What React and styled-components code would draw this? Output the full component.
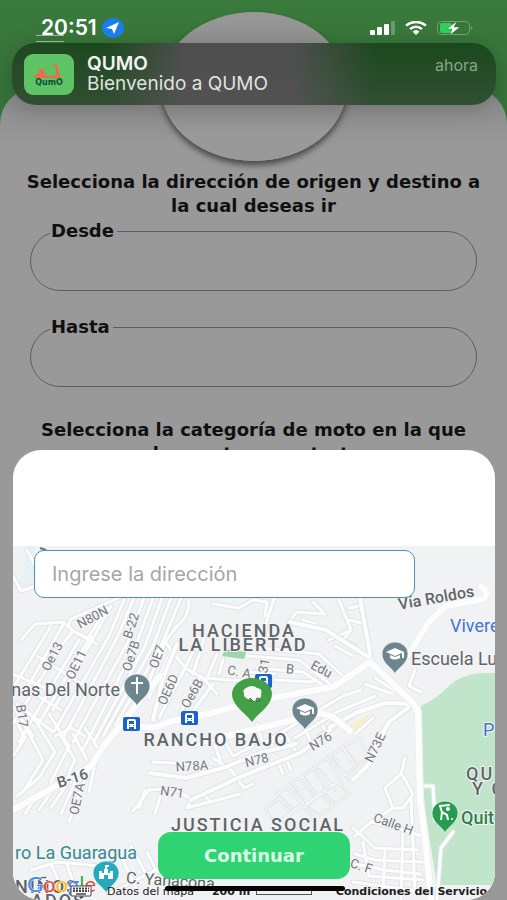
import * as React from "react"
import styled, { createGlobalStyle } from "styled-components"

const GlobalStyle = createGlobalStyle`
  :root {
    --ff-brand: "DejaVu Sans", Verdana, sans-serif;
    --ff-system: Inter, "Liberation Sans", sans-serif;
    --ff-map: Roboto, "Liberation Sans", sans-serif;
  }

  * {
    box-sizing: border-box;
  }

  body {
    margin: 0;
    background: #999999;
  }
`

const Screen = styled.div`
  position: relative;
  height: 100vh;
  overflow: hidden;
  background: linear-gradient(180deg, #3a7a3b 0, #35713a 130px);
  font-family: var(--ff-brand);
`

const StatusBar = styled.div`
  position: absolute;
  z-index: 3;
  top: 16px;
  left: 0;
  right: 0;
  display: flex;
  align-items: center;
  justify-content: space-between;
  height: 24px;
  padding: 0 34px 0 41px;
`

const StatusGroup = styled.div`
  display: flex;
  align-items: center;
  gap: ${({ $gap }) => $gap}px;
`

const Clock = styled.time`
  font: 600 21px/24px var(--ff-system);
  color: #ffffff;
`

const MenuButton = styled.button`
  position: absolute;
  top: 28px;
  left: 36px;
  width: 28px;
  height: 14px;
  padding: 7px 0 0;
  border: 0;
  background: none;
`

const MenuLines = styled.span`
  display: block;
  height: 7px;
  border: solid #a3bca4;
  border-width: 1px 0;
`

const Avatar = styled.div`
  position: relative;
  z-index: 1;
  width: 186px;
  height: 149px;
  margin: 0 auto;
  border-radius: 50%;
  background: linear-gradient(180deg, #989898, #8a8a8a 50%, #999999 80%);
  box-shadow: 0 4px 6px rgba(0, 0, 0, 0.55);
`

const Hero = styled.header`
  padding-top: 12px;
`

const Content = styled.main`
  min-height: 100vh;
  margin-top: -73px;
  padding: 82px 24px 0;
  border-radius: 36px 36px 0 0;
  background: linear-gradient(180deg, #8a8a8a, #999999 60px);
`

const Heading = styled.h2`
  margin: 0;
  padding: ${({ $spaced }) => ($spaced ? "31px 0 0" : "0 0 1px")};
  font: 700 18px/24px var(--ff-brand);
  color: #101010;
  text-align: center;
`

const Field = styled.fieldset`
  height: 72px;
  margin: 0 6px;
  padding: 0 16px 0 19px;
  border: 1px solid #5e5e5e;
  border-radius: 33px;

  & + & {
    margin-top: 24px;
  }
`

const FieldLegend = styled.legend`
  padding: 0 3px 0 1px;
  font: 700 18px/24px var(--ff-brand);
  color: #101010;
`

const FieldInput = styled.input`
  display: block;
  width: 100%;
  height: 40px;
  padding: 0;
  border: 0;
  outline: 0;
  background: transparent;
  font: 400 18px/24px var(--ff-brand);
`

const Toast = styled.section`
  position: absolute;
  z-index: 2;
  top: 43px;
  left: 12px;
  right: 11px;
  display: flex;
  align-items: flex-start;
  height: 62px;
  padding: 11px 18px 10px 12px;
  border-radius: 24px;
  background:
    linear-gradient(180deg, transparent, rgba(90, 90, 90, 0.35)),
    linear-gradient(90deg, #1d481e 0, #1d481e 20%, #4e4e4e 36%, #4e4e4e 58%, #1b491d 75%);
  box-shadow: 0 4px 24px rgba(0, 0, 0, 0.2);
  font-family: var(--ff-system);
`

const AppIcon = styled.svg`
  flex: none;
  width: 50px;
  height: 41px;
`

const ToastText = styled.div`
  flex: 1;
  padding-left: 13px;
  font-size: 19px;
  line-height: 20px;
  color: #dfe3df;
`

const ToastTitle = styled.strong`
  display: block;
  font-weight: 600;
  color: #f1f4f1;
`

const ToastTime = styled.span`
  font-size: 16px;
  line-height: 22px;
  color: #88a489;
`

const Sheet = styled.section`
  position: absolute;
  z-index: 2;
  left: 13px;
  right: 12px;
  bottom: 0;
  display: flex;
  flex-direction: column;
  height: 50vh;
  padding-top: 96px;
  border-radius: 28px;
  overflow: hidden;
  background: #ffffff;
`

const MapArea = styled.div`
  position: relative;
  flex: 1;
  display: flex;
  flex-direction: column;
  justify-content: space-between;
  padding: 4px 0 21px;
`

const MapCanvas = styled.svg`
  position: absolute;
  inset: 0;
  width: 100%;
  height: 100%;
`

const AddressInput = styled.input`
  position: relative;
  width: 79%;
  height: 48px;
  margin-left: 21px;
  padding: 0 17px;
  border: 1px solid #4b94b3;
  border-radius: 10px;
  outline: 0;
  background: #ffffff;
  font: 400 20px/24px var(--ff-system);
  color: #333333;

  &::placeholder {
    color: #a6a6a6;
    opacity: 1;
  }
`

const ContinueButton = styled.button`
  position: relative;
  align-self: center;
  width: 40%;
  height: 47px;
  border: 0;
  border-radius: 13px;
  background: #2fd372;
  font: 700 18px/24px var(--ff-brand);
  color: #d9ffe5;
`

const MapFooter = styled.footer`
  position: absolute;
  left: 57px;
  right: 8px;
  bottom: 0;
  display: flex;
  align-items: center;
  height: 16px;
  font: 400 11px/16px var(--ff-brand);
  color: #202020;
  white-space: nowrap;
`

const KeyboardButton = styled.button`
  display: flex;
  width: 22px;
  margin-right: 15px;
  padding: 0;
  border: 0;
  background: none;
`

const Scale = styled.span`
  display: flex;
  flex: 1;
  align-items: center;
  gap: 6px;
  margin-left: 18px;
  font-weight: 700;
`

const ScaleBar = styled.span`
  width: 56px;
  height: 6px;
  border: 1px solid #555555;
  border-top: 0;
`

const TermsLink = styled.a`
  font-weight: 700;
  color: #202020;
  text-decoration: none;
`

const HomeIndicator = styled.div`
  position: absolute;
  z-index: 3;
  bottom: 9px;
  left: 50%;
  width: 180px;
  height: 5px;
  margin-left: -89px;
  border-radius: 3px;
  background: #050505;
`

const MapText = styled.text`
  font: ${({ $weight = 400 }) => $weight} ${({ $size = 18 }) => $size}px var(--ff-map);
  fill: ${({ $color = "#5f6568" }) => $color};
  stroke: #f3f5f6;
  stroke-width: 2px;
  stroke-linejoin: round;
  paint-order: stroke;
`

const AreaText = styled(MapText)`
  letter-spacing: 2px;
`

const STREETS = [
  // western grid
  "M8 94 L22 78 L50 76 L60 85 L48 100 L0 178",
  "M38 80 L0 142", "M50 79 L14 142", "M66 94 L6 196", "M78 90 L26 177",
  "M110 50 L58 73 Q53 80 60 85 L75 92 L94 62", "M98 60 L78 96 L40 164",
  "M111 54 L96 90 L42 184", "M121 52 L104 92 L50 192",
  "M131 52 L116 94 L60 196", "M140 52 L124 96 L70 204",
  "M149 52 L132 100 L81 196", "M158 52 L140 100 L90 190",
  "M168 52 L148 100 L102 180", "M176 54 Q176 72 164 80 L152 96 L134 140",
  "M0 128 L16 135 L35 143", "M24 110 L66 136", "M60 85 L84 98",
  "M4 158 L40 186", "M12 142 L48 164", "M20 190 L0 160",
  "M0 210 L12 192 L4 176", "M22 174 L42 206 L26 232 L4 250",
  "M36 168 L56 200 L38 236", "M48 190 L62 214 L48 244", "M60 188 L74 214",
  "M72 182 L86 204", "M12 180 L30 214 L10 246", "M42 190 L58 182 L72 190",
  "M78 220 L70 238 L56 276", "M84 210 L76 246", "M54 238 L38 262", "M42 240 L26 264",
  "M26 246 L12 268", "M62 236 L48 268",
  // between the two highways
  "M152 96 L172 122 L190 132 L204 148", "M172 122 L146 172", "M188 130 L168 166",
  "M158 106 L136 152", "M200 138 L178 168", "M180 106 L172 122", "M192 90 L180 128",
  "M204 108 L194 132 L240 136", "M210 114 L206 128", "M0 30 L8 45 L20 41", "M14 4 L24 24",
  // around Hacienda La Libertad
  "M200 58 L226 62 L240 54 L254 56 L252 70", "M262 50 L254 74 L250 92",
  "M234 110 L286 114 L320 140", "M248 102 L306 108 L332 132",
  "M244 122 L290 126 L314 142", "M262 134 L300 136", "M232 126 L262 128",
  "M276 76 L284 66 L312 68 L300 56", "M290 74 L302 78",
  "M326 54 L338 84 L330 94 L342 100", "M336 62 L346 60", "M336 74 L352 78",
  "M322 100 L340 110", "M316 94 L338 84",
  // Rancho Bajo
  "M180 252 L174 262 L227 248", "M190 248 L198 256", "M200 212 L218 224 L231 242 L240 238",
  "M202 200 L210 222", "M212 196 L220 210 L240 200", "M180 200 L262 178",
  "M244 178 L250 198 L270 192", "M256 194 L264 206", "M272 188 L282 204",
  "M140 216 L176 218 L206 224", "M120 265 L136 244 L160 242 L176 252",
  "M132 244 L126 262", "M148 248 L142 268", "M266 218 L270 228", "M274 214 L278 224",
  "M252 196 L330 150 L348 144", "M282 192 L324 166 L362 150", "M300 202 L292 182",
  "M306 190 L340 170", "M342 188 L360 172", "M352 138 L380 148", "M362 132 L390 150",
  "M402 124 L396 140 L408 146", "M310 180 L316 194", "M326 174 L332 184",
  // Justicia Social
  "M392 212 L388 228 L372 242 L380 262 L358 276 L342 290", "M390 230 L400 248 L390 262 L380 262",
  "M340 282 L362 302 L405 304", "M350 296 L356 330 L410 334", "M342 308 L362 314 L410 316",
  "M342 318 L372 324 L408 328", "M358 276 L392 284 L408 290", "M398 252 L402 348",
  "M390 284 L388 354", "M372 304 L370 348", "M340 336 L412 346",
  "M410 240 L420 240 L422 274", "M424 354 L428 302 L440 286",
  // south-west corner
  "M18 324 L44 316 L86 320", "M24 338 L82 336", "M38 318 L46 336", "M54 318 L60 336",
  "M118 300 L134 330 L150 342", "M108 310 L124 344", "M134 306 L144 326", "M96 348 L150 320",
]

const OUTLINES = [
  "M252 264 L266 252 L278 268 L264 280 Z", "M264 248 L274 242 L290 258 L280 264 Z",
  "M276 238 L286 232 L302 252 L292 258 Z", "M290 230 L300 222 L314 244 L304 250 Z",
  "M302 220 L314 212 L328 234 L318 240 Z", "M316 210 L330 202 L342 222 L332 230 Z",
  "M330 200 L348 192 L354 212 L344 220 Z", "M270 272 L290 260 L300 272 L284 284 Z",
  "M292 260 L308 248 L320 260 L306 270 Z", "M310 246 L326 236 L336 248 L322 258 Z",
  "M282 240 L296 260", "M308 224 L322 244", "M322 212 L336 234",
]

const HIGHWAYS = [
  "M0 264 L50 236 L78 220 L90 201 L112 174 L127 154 L147 130",
  "M119 178 Q140 186 155 176 L194 168 L240 156 L270 150 L320 141 L357 116 L400 157 L405 166 L407 254 L412 292 L418 354",
  "M396 108 L416 76 L433 60 L470 53 Q478 46 468 41",
  "M206 192 L307 167 L320 171 L337 185",
]

const AVENUES = [
  "M347 52 L357 108", "M277 76 L313 84 L357 112",
  "M317 181 L345 166 L373 157 L400 158", "M400 158 L376 176 L366 194 L357 217 L340 234",
  "M178 254 L227 231 L287 207 L317 184", "M137 227 L173 232 L213 221 L247 207 L283 198",
  "M164 98 L150 132 L140 174",
]

const Roads = ({ paths, width, casing = "#e2e5e8" }) => (
  <g fill="none" strokeLinejoin="round" strokeLinecap="round">
    {paths.map(d => (
      <path key={d} d={d} stroke={casing} strokeWidth={width + 2} />
    ))}
    {paths.map(d => (
      <path key={d} d={d} stroke="#fdfdfe" strokeWidth={width} />
    ))}
  </g>
)

const Pin = ({ x, y, color = "#6c858f", children }) => (
  <g transform={`translate(${x} ${y})`}>
    <path
      d="M0 20 C-2 14 -13 10 -13 0 A13 12 0 0 1 13 0 C13 10 2 14 0 20 Z"
      fill={color}
      stroke="#ffffff"
      strokeWidth="0.6"
    />
    {children}
  </g>
)

const SchoolCap = () => (
  <g fill="#ffffff">
    <path d="M-9 -2 L0 -6 L9 -2 L0 2 Z" />
    <path d="M-5 1 L0 3 L5 1 V4 Q0 7 -5 4 Z" />
    <path d="M7 -2 H9 V4 H7 Z" />
  </g>
)

const BusStop = ({ x, y }) => (
  <g transform={`translate(${x} ${y})`}>
    <rect x="-9" y="-7" width="17" height="14" rx="2" fill="#1b62cf" />
    <path d="M-5 -3 Q-5 -5 -3 -5 H2 Q4 -5 4 -3 V5 H2 V3 H-3 V5 H-5 Z" fill="#ffffff" />
    <path d="M-3 -3 H2 V0 H-3 Z" fill="#1b62cf" />
    <path d="M-3 1 H-2 V2 H-3 Z M1 1 H2 V2 H1 Z" fill="#1b62cf" />
  </g>
)

const STREET_NAMES = [
  ["N80N", 80, 72, -28, 13], ["Oe13", 40, 111, -62, 13], ["OE11", 64, 119, -64, 13],
  ["B-22", 119, 80, -72, 13], ["Oe7B", 119, 110, -72, 13], ["OE7", 145, 111, -70, 13],
  ["OE6D", 156, 144, -66, 13], ["Oe6B", 180, 148, -60, 13], ["B17", 8, 170, 82, 13],
  ["C. A", 226, 127, 10, 13], ["31", 252, 120, -80, 13], ["B", 277, 124, 4, 13],
  ["Edu", 308, 124, 28, 13], ["OE7A", 65, 253, -78, 13], ["N78A", 179, 221, -4, 13],
  ["N78", 244, 215, -14, 13], ["N71", 159, 247, 8, 13], ["N76", 308, 196, -32, 13],
  ["N73E", 363, 202, -64, 13], ["Calle H", 380, 279, 20, 13], ["C. F", 348, 321, 18, 13],
]

const CityMap = () => (
  <MapCanvas viewBox="0 0 482 354" preserveAspectRatio="xMidYMid slice" role="img" aria-label="Mapa">
    <rect width="482" height="354" fill="#f0f2f4" />
    <path d="M14 0 L22 0 L20 40 L0 44 L10 30 Z" fill="#e6f1f6" />
    <path
      d="M408 160 Q425 152 438 138 Q450 128 470 127 H482 V339 H424 L416 290 Q404 210 408 160 Z"
      fill="#c1e5cb"
    />
    <path d="M336 180 L354 170 L358 176 L342 188 Z" fill="#f8f1c6" />
    <Roads paths={OUTLINES} width={1} />
    <Roads paths={STREETS} width={3} />
    <Roads paths={AVENUES} width={4} />
    <Roads paths={HIGHWAYS} width={6} casing="#eceef0" />
    <path d="M212 103 L233 106 L231 113 L209 110 Z" fill="#9fd3ac" />
    <path d="M27 2 L33 4" stroke="#6d7376" strokeWidth="2" />

    {STREET_NAMES.map(([name, x, y, angle, size]) => (
      <MapText
        key={name}
        $size={size}
        $color="#75797c"
        textAnchor="middle"
        dominantBaseline="middle"
        transform={`translate(${x} ${y}) rotate(${angle})`}
      >
        {name}
      </MapText>
    ))}
    <MapText $size={15} $weight={500} textAnchor="middle" transform="translate(61 237) rotate(-18)">B-16</MapText>
    <MapText $size={16} $weight={500} textAnchor="middle" transform="translate(424 57) rotate(-10)">Vía Roldos</MapText>
    <MapText $size={16} textAnchor="middle" transform="translate(157 340) rotate(4)">C. Yanacona</MapText>

    <AreaText $weight={500} textAnchor="middle" x="231" y="91">HACIENDA</AreaText>
    <AreaText $weight={500} textAnchor="middle" x="230" y="105">LA LIBERTAD</AreaText>
    <AreaText $weight={500} textAnchor="middle" x="203" y="200">RANCHO BAJO</AreaText>
    <AreaText $weight={500} textAnchor="middle" x="245" y="285">JUSTICIA SOCIAL</AreaText>
    <AreaText $weight={500} x="453" y="234">QU</AreaText>
    <AreaText $weight={500} x="459" y="249">Y C</AreaText>
    <AreaText $weight={500} x="2" y="347">NIÑOS</AreaText>
    <AreaText $weight={500} x="18" y="361">ADOS</AreaText>

    <MapText textAnchor="end" x="107" y="150">nas Del Norte</MapText>
    <MapText x="398" y="119">Escuela Lu</MapText>
    <MapText $color="#3f73d0" x="437" y="86">Vivere</MapText>
    <MapText $color="#3f73d0" x="470" y="190">P</MapText>
    <MapText $color="#2e7d4f" $weight={500} x="448" y="278">Quit</MapText>
    <MapText $color="#37898d" textAnchor="end" x="124" y="313">ro La Guaragua</MapText>

    <BusStop x={119} y={178} />
    <BusStop x={177} y={172} />
    <BusStop x={251} y={135} />
    <Pin x={124} y={140}>
      <path d="M-1 -9 H1 V-4 H6 V-2 H1 V8 H-1 V-2 H-6 V-4 H-1 Z" fill="#ffffff" />
    </Pin>
    <Pin x={382} y={108}><SchoolCap /></Pin>
    <Pin x={292} y={164}><SchoolCap /></Pin>
    <Pin x={432} y={267} color="#289b50">
      <circle cx="3" cy="-4" r="2" fill="#ffffff" />
      <path d="M-6 -7 L5 -8 M-5 -7 L-3 -1 L2 2 L3 7 M-3 -1 L-4 7" stroke="#ffffff" strokeWidth="2" fill="none" />
      <circle cx="7" cy="6" r="1" fill="#ffffff" />
    </Pin>
    <Pin x={93} y={327} color="#26a9b8">
      <path d="M-7 6 V-2 H-4 V0 H-2 V-4 H-1 V-8 H3 V-6 H1 V-4 H2 V0 H4 V-2 H7 V6 H2 V2 H-2 V6 Z" fill="#ffffff" />
    </Pin>
    <path
      d="M239 176 C234 168 219 160 219 148 A20 16 0 0 1 259 148 C259 160 244 168 239 176 Z"
      fill="#44a046"
    />
    <path d="M233 142 Q239 138 244 142 Q250 143 248 148 Q249 152 245 153 L242 155 L235 153 Q230 151 231 147 Q229 144 233 142 Z" fill="#f5f7f8" />
    <path d="M237 156 V152 L240 155 M244 156 Q242 152 245 152 Q248 153 246 156" stroke="#435a48" strokeWidth="1" fill="none" />

    <text x="14" y="346" fontFamily="Lato, sans-serif" fontSize="22" stroke="#ffffff" strokeWidth="1" paintOrder="stroke">
      <tspan fill="#4285f4">G</tspan>
      <tspan fill="#ea4335">o</tspan>
      <tspan fill="#fbbc05">o</tspan>
      <tspan fill="#4285f4">g</tspan>
      <tspan fill="#34a853">l</tspan>
      <tspan fill="#ea4335">e</tspan>
    </text>
  </MapCanvas>
)

const LocationIcon = () => (
  <svg width="22" height="20" viewBox="0 0 22 20" aria-hidden="true">
    <ellipse cx="11" cy="10" rx="11" ry="10" fill="#1a7ee8" />
    <path d="M17 4 L4 10 L10 11 L12 16 Z" fill="#ffffff" />
  </svg>
)

const SignalIcon = () => (
  <svg width="26" height="14" viewBox="0 0 26 14" aria-hidden="true" fill="#ffffff">
    <rect x="1" y="9" width="5" height="5" rx="1" />
    <rect x="8" y="6" width="5" height="8" rx="1" />
    <rect x="15" y="3" width="5" height="11" rx="1" />
    <rect x="22" y="0" width="4" height="14" rx="1" opacity="0.25" />
  </svg>
)

const WifiIcon = () => (
  <svg width="22" height="14" viewBox="0 0 22 14" aria-hidden="true" fill="none" stroke="#ffffff">
    <path d="M1 4.5 Q11 -2.5 21 4.5" strokeWidth="2.6" />
    <path d="M5 8 Q11 3.5 17 8" strokeWidth="2.4" />
    <path d="M7.5 10.5 Q11 7.5 14.5 10.5 L11 14 Z" fill="#ffffff" stroke="none" />
  </svg>
)

const BatteryIcon = () => (
  <svg width="36" height="16" viewBox="0 0 36 16" aria-hidden="true">
    <rect x="0.5" y="1.5" width="32" height="13" rx="4" fill="none" stroke="#779e78" />
    <rect x="3" y="3" width="12" height="10" rx="2" fill="#30cf58" />
    <path d="M34 6 Q37 8 34 10 Z" fill="#779e78" />
    <path d="M20 1 L10 9 H15 L13 15 L23 7 H17 Z" fill="#ffffff" stroke="#356f38" strokeWidth="0.5" />
  </svg>
)

const KeyboardIcon = () => (
  <svg width="22" height="14" viewBox="0 0 22 14" aria-hidden="true">
    <rect x="1" y="1" width="20" height="10" rx="1" fill="#ffffff" stroke="#444444" />
    <path d="M3 3.5 H19 M3 6 H19" stroke="#444444" strokeWidth="2" strokeDasharray="2 1" />
    <path d="M6 9 H16" stroke="#444444" strokeWidth="1.5" />
    <path d="M9 12 H13 L11 14 Z" fill="#444444" />
  </svg>
)

const QumoIcon = () => (
  <AppIcon viewBox="0 0 50 41" aria-hidden="true">
    <rect width="50" height="41" rx="9" fill="#5ec364" />
    <g fill="#ef6b4e">
      <path d="M11 23 Q12 19 15 19 V15 H20 V19 Q22 20 23 22 H29 L32 20 L31 12 H28 V11 H33 L34 15 L37 23 L32 24 H11 Z" />
      <circle cx="33" cy="10" r="1" />
    </g>
    <text x="25" y="31" textAnchor="middle" fontFamily="DejaVu Sans, sans-serif" fontWeight="700" fontSize="8" fill="#124b3e">
      QumO
    </text>
  </AppIcon>
)

const AddressField = ({ id, label }) => (
  <Field>
    <FieldLegend>
      <label htmlFor={id}>{label}</label>
    </FieldLegend>
    <FieldInput id={id} type="text" />
  </Field>
)

const App = () => {
  return (
    <Screen>
      <GlobalStyle />
      <StatusBar>
        <StatusGroup $gap={5}>
          <Clock>20:51</Clock>
          <LocationIcon />
        </StatusGroup>
        <StatusGroup $gap={10}>
          <SignalIcon />
          <WifiIcon />
          <BatteryIcon />
        </StatusGroup>
      </StatusBar>

      <Hero>
        <MenuButton type="button" aria-label="Menú">
          <MenuLines />
        </MenuButton>
        <Avatar />
      </Hero>

      <Toast role="status">
        <QumoIcon />
        <ToastText>
          <ToastTitle>QUMO</ToastTitle>
          Bienvenido a QUMO
        </ToastText>
        <ToastTime>ahora</ToastTime>
      </Toast>

      <Content>
        <Heading>Selecciona la dirección de origen y destino a la cual deseas ir</Heading>
        <AddressField id="desde" label="Desde" />
        <AddressField id="hasta" label="Hasta" />
        <Heading $spaced>
          Selecciona la categoría de moto en la que
          <br />
          deseas transportarte
        </Heading>
      </Content>

      <Sheet>
        <MapArea>
          <CityMap />
          <AddressInput type="text" placeholder="Ingrese la dirección" aria-label="Ingrese la dirección" />
          <ContinueButton type="button">Continuar</ContinueButton>
          <MapFooter>
            <KeyboardButton type="button" aria-label="Combinaciones de teclas">
              <KeyboardIcon />
            </KeyboardButton>
            <span>Datos del mapa</span>
            <Scale>
              200 m
              <ScaleBar />
            </Scale>
            <TermsLink href="#condiciones">Condiciones del Servicio</TermsLink>
          </MapFooter>
        </MapArea>
      </Sheet>
      <HomeIndicator />
    </Screen>
  )
}

export default App
